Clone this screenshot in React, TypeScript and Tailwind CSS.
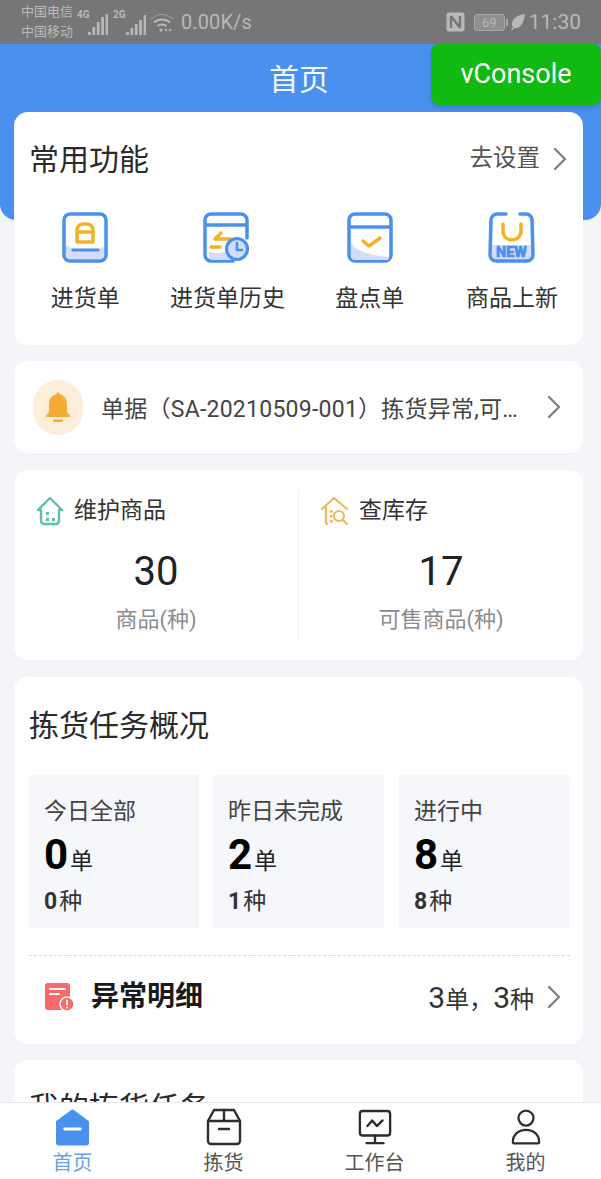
import type { ReactNode } from "react";

const blue = "#4a90ee";
const yellow = "#f4b325";
const lavender = "#d3dcf8";

function Chevron({ className }: { className?: string }) {
  return (
    <svg viewBox="0 0 14 24" className={className} fill="none" stroke="#7d7d7d" strokeWidth="2.2" strokeLinecap="round" strokeLinejoin="round">
      <polyline points="2,2 12,12 2,22" />
    </svg>
  );
}

function Signal({ bars, width }: { bars: number[]; width: number }) {
  return (
    <svg width={width} height="22" viewBox={`0 0 ${width} 22`} fill="#b8b8b8">
      {bars.map((h, i) => (
        <rect key={i} x={i * 4.4} y={22 - h} width="2.8" height={h} />
      ))}
    </svg>
  );
}

function StatusBar() {
  return (
    <div className="h-[44px] shrink-0 bg-[#767676] text-[#b9b9b9] flex items-center pl-[21px] pr-[20px]">
      <div className="flex flex-col text-[13px] leading-[20px] w-[52px] whitespace-nowrap">
        <span>中国电信</span>
        <span>中国移动</span>
      </div>
      <div className="ml-[4px] flex items-end h-[26px]">
        <span className="text-[10px] font-bold leading-none self-start mt-[1px] w-[11px] whitespace-nowrap">4G</span>
        <Signal bars={[3, 8, 13, 18, 21]} width={20} />
      </div>
      <div className="ml-[5px] flex items-end h-[26px]">
        <span className="text-[10px] font-bold leading-none self-start mt-[1px] w-[13px] whitespace-nowrap">2G</span>
        <Signal bars={[3, 7, 11, 15, 20]} width={20} />
      </div>
      <svg width="24" height="24" viewBox="0 0 24 24" fill="none" stroke="#b8b8b8" className="ml-[4px]">
        <path d="M1 9c6-6 16-6 22 0" strokeWidth="1.2" opacity="0.6" />
        <path d="M4 12.500c4.500-4 11.500-4 16 0" strokeWidth="2" />
        <path d="M7.500 16c2.500-2 6.500-2 9 0" strokeWidth="2" />
        <circle cx="11" cy="20" r="1.600" fill="#b8b8b8" stroke="none" />
        <circle cx="16" cy="20" r="1.200" fill="#b8b8b8" stroke="none" />
        <circle cx="20" cy="20" r="1.200" fill="#b8b8b8" stroke="none" />
      </svg>
      <span className="ml-[7px] text-[20px] tracking-[0.1px]">0.00K/s</span>

      <div className="ml-auto flex items-center">
        <svg width="19" height="20" viewBox="0 0 19 20" fill="none">
          <rect x="0.500" y="0.500" width="18" height="19" rx="2.500" fill="#b8b8b8" />
          <path d="M5 4v12M14 4v12M5 4l9 12" stroke="#767676" strokeWidth="2.400" />
        </svg>
        <div className="ml-[9px] w-[31px] h-[17px] rounded-[3px] border border-[#a8a8a8] bg-[#8f8f8f] flex items-center justify-center text-[13px] leading-none">69</div>
        <div className="ml-[1px] w-[2px] h-[7px] bg-[#a8a8a8]" />
        <svg width="14" height="16" viewBox="0 0 14 16" className="ml-[3px]" fill="#b8b8b8">
          <path d="M14 0C7 1 1 4 1 10c0 1.500.400 2.500 1 3.300L0 16l1 .5L3.500 14c5 1 9-3 10.500-14z" />
        </svg>
        <span className="ml-[4px] text-[21px] leading-none">11:30</span>
      </div>
    </div>
  );
}

function Card({ className, children }: { className?: string; children: ReactNode }) {
  return <div className={`bg-white rounded-[14px] ${className ?? ""}`}>{children}</div>;
}

function StockInIcon() {
  return (
    <svg width="46" height="51" viewBox="0 0 46 51" fill="none">
      <rect x="2" y="2" width="42" height="47" rx="6" fill="#fff" stroke={blue} strokeWidth="3.500" />
      <path d="M4 33c10 7 24 6 38 2v8a4 4 0 0 1-4 4H8a4 4 0 0 1-4-4z" fill={lavender} />
      <path d="M15 29V18a6 6 0 0 1 6-6h4a6 6 0 0 1 6 6v11a1 1 0 0 1-1 1H16a1 1 0 0 1-1-1zM15 20h16" fill="#fff" stroke={yellow} strokeWidth="3.500" strokeLinejoin="round" />
      <path d="M11 38h25" stroke={blue} strokeWidth="3.200" strokeLinecap="round" />
    </svg>
  );
}

function StockHistoryIcon() {
  return (
    <svg width="48" height="51" viewBox="0 0 48 51" fill="none">
      <path d="M30 49H8a6 6 0 0 1-6-6V8a6 6 0 0 1 6-6h30a6 6 0 0 1 6 6v18" stroke={blue} strokeWidth="3.500" strokeLinecap="round" />
      <path d="M2 13h42" stroke={blue} strokeWidth="3.500" />
      <path d="M6 40c8 2 14 1 20 0l4 8H9a4 4 0 0 1-3-3z" fill={lavender} />
      <path d="M18 21l-6 6h16M8 35h9" stroke={yellow} strokeWidth="3.500" strokeLinecap="round" strokeLinejoin="round" />
      <circle cx="34" cy="37" r="10.500" fill={lavender} stroke={blue} strokeWidth="3.200" />
      <path d="M34 31v7h5" stroke={blue} strokeWidth="2.600" strokeLinecap="round" strokeLinejoin="round" />
    </svg>
  );
}

function StockCheckIcon() {
  return (
    <svg width="46" height="51" viewBox="0 0 46 51" fill="none">
      <rect x="2" y="2" width="42" height="47" rx="6" fill="#fff" stroke={blue} strokeWidth="3.500" />
      <path d="M4 31c6 9 18 12 38 14v1a2 2 0 0 1-2 2H8a4 4 0 0 1-4-4z" fill={lavender} />
      <path d="M2 15h42" stroke={blue} strokeWidth="3.500" />
      <path d="M16 29l6 5 11-8" stroke={yellow} strokeWidth="3.500" strokeLinecap="round" strokeLinejoin="round" />
    </svg>
  );
}

function NewGoodsIcon() {
  return (
    <svg width="47" height="51" viewBox="0 0 47 51" fill="none">
      <path d="M4 33h39v11a4 4 0 0 1-4 4H8a4 4 0 0 1-4-4z" fill={lavender} />
      <path d="M18 2H9a6 6 0 0 0-6 6L2 43a6 6 0 0 0 6 6h31a6 6 0 0 0 6-6L44 8a6 6 0 0 0-6-6h-6" stroke={blue} strokeWidth="3.500" strokeLinecap="round" />
      <path d="M15 12v7a9 9 0 0 0 18 0v-7" stroke={yellow} strokeWidth="3.500" strokeLinecap="round" />
      <text x="23.500" y="45" textAnchor="middle" fontSize="14.500" fontWeight="900" fill={blue} stroke={blue} strokeWidth="0.500" fontFamily="Roboto, sans-serif">NEW</text>
    </svg>
  );
}

const shortcuts = [
  { label: "进货单", icon: <StockInIcon /> },
  { label: "进货单历史", icon: <StockHistoryIcon /> },
  { label: "盘点单", icon: <StockCheckIcon /> },
  { label: "商品上新", icon: <NewGoodsIcon /> },
];

function Shortcuts() {
  return (
    <Card className="h-[233px]">
      <div className="flex items-center justify-between pl-[15px] pr-[16px] pt-[20px] h-[76px]">
        <span className="text-[30px] leading-[40px] text-[#2b2b2b]">常用功能</span>
        <div className="flex items-center text-[23.500px] text-[#555] -mt-[2px]">
          去设置
          <Chevron className="w-[14px] h-[24px] ml-[13px]" />
        </div>
      </div>
      <div className="grid grid-cols-4 mt-[24px]">
        {shortcuts.map((s) => (
          <div key={s.label} className="flex flex-col items-center">
            <div className="h-[51px] flex items-center">{s.icon}</div>
            <span className="mt-[20px] text-[23px] leading-[32px] text-[#333] whitespace-nowrap">{s.label}</span>
          </div>
        ))}
      </div>
    </Card>
  );
}

function Notice() {
  return (
    <Card className="h-[92px] flex items-center pl-[19px] pr-[22px]">
      <div className="w-[50px] h-[55px] rounded-full bg-[#fdeed9] flex items-center justify-center shrink-0">
        <svg width="24" height="30" viewBox="0 0 24 30" fill="#f5ac35">
          <path d="M12 0l2.500 2.500C19 4 21 7.500 21 12v8l3 3.500V25H0v-1.500L3 20v-8c0-4.500 2-8 6.500-9.500z" />
          <rect x="7" y="27.500" width="10" height="2.500" rx="1.200" />
        </svg>
      </div>
      <span className="ml-[18px] mt-[7px] w-[420px] truncate text-[23px] tracking-[0.25px] text-[#444]">单据（SA-20210509-001）拣货异常,可能需要处理</span>
      <Chevron className="w-[14px] h-[24px] ml-auto" />
    </Card>
  );
}

function MaintainIcon() {
  return (
    <svg width="28" height="30" viewBox="0 0 28 30" fill="none" stroke="#5cc2a6" strokeWidth="2.400" strokeLinejoin="round" strokeLinecap="round">
      <path d="M14 2L2 14h3v11a3 3 0 0 0 3 3h12a3 3 0 0 0 3-3V14h3z" />
      <rect x="10" y="16" width="3" height="3" fill="#5cc2a6" stroke="none" />
      <rect x="10" y="22" width="3" height="3" fill="#5cc2a6" stroke="none" />
      <rect x="16" y="22" width="3" height="3" fill="#5cc2a6" stroke="none" />
    </svg>
  );
}

function StockQueryIcon() {
  return (
    <svg width="28" height="30" viewBox="0 0 28 30" fill="none" stroke="#ecb95c" strokeWidth="2.200" strokeLinejoin="round" strokeLinecap="round">
      <path d="M1 13L13 2l13 11M5 11v14a3 3 0 0 0 1 3" />
      <circle cx="18" cy="20" r="5" />
      <path d="M22 24l4 4" />
      <rect x="9" y="14" width="2.600" height="2.600" fill="#ecb95c" stroke="none" />
      <rect x="9" y="19" width="2.600" height="2.600" fill="#ecb95c" stroke="none" />
      <rect x="9" y="24" width="2.600" height="2.600" fill="#ecb95c" stroke="none" />
    </svg>
  );
}

function StatCell({ icon, title, value, unit }: { icon: ReactNode; title: string; value: string; unit: string }) {
  return (
    <div className="flex-1">
      <div className="flex items-center h-[30px] pl-[22px] gap-[10px] text-[23px] text-[#333]">
        {icon}
        <span>{title}</span>
      </div>
      <div className="mt-[23px] text-center text-[40px] leading-[46px] text-[#222]">{value}</div>
      <div className="mt-[10px] text-center text-[22px] leading-[30px] text-[#8c8c8c]">{unit}</div>
    </div>
  );
}

function Stats() {
  return (
    <Card className="h-[190px] mt-[1px] pt-[26px] flex">
      <StatCell icon={<MaintainIcon />} title="维护商品" value="30" unit="商品(种)" />
      <div className="w-[1px] h-[149px] -mt-[5px] bg-[#efefef]" />
      <StatCell icon={<StockQueryIcon />} title="查库存" value="17" unit="可售商品(种)" />
    </Card>
  );
}

function TaskTile({ title, orders, kinds, className }: { title: string; orders: string; kinds: string; className: string }) {
  return (
    <div className={`bg-[#f5f7fb] h-[153px] pl-[15px] pt-[21px] ${className}`}>
      <div className="text-[23px] leading-[32px] text-[#444]">{title}</div>
      <div className="mt-[3px] flex items-baseline h-[48px] text-[#222]">
        <span className="text-[42px] leading-[48px] font-bold text-black">{orders}</span>
        <span className="ml-[2px] text-[23px]">单</span>
      </div>
      <div className="mt-[7px] flex items-baseline text-[#333]">
        <span className="text-[23px] leading-[32px] font-bold">{kinds}</span>
        <span className="ml-[2px] text-[23px] leading-[32px]">种</span>
      </div>
    </div>
  );
}

function PickingOverview() {
  return (
    <Card className="h-[367px] mt-[1px] pl-[15px] pr-[13px]">
      <div className="pt-[29px] text-[30px] leading-[40px] text-[#2b2b2b]">拣货任务概况</div>
      <div className="mt-[29px] flex">
        <TaskTile title="今日全部" orders="0" kinds="0" className="w-[170px]" />
        <TaskTile title="昨日未完成" orders="2" kinds="1" className="w-[171px] ml-[14px]" />
        <TaskTile title="进行中" orders="8" kinds="8" className="w-[171px] ml-[15px]" />
      </div>
      <div className="mt-[27px] border-t border-dashed border-[#d9d9d9] h-[89px] pb-[6px] flex items-center pl-[16px] pr-[9px]">
        <svg width="30" height="30" viewBox="0 0 30 30" className="shrink-0">
          <rect x="0" y="1" width="25" height="27" rx="3" fill="#f96a68" />
          <path d="M5 7h15M5 12h9" stroke="#fff" strokeWidth="2" strokeLinecap="round" />
          <circle cx="22" cy="22" r="7" fill="#f96a68" stroke="#fff" strokeWidth="1.500" />
          <path d="M22 18.500v4" stroke="#fff" strokeWidth="1.800" strokeLinecap="round" />
          <circle cx="22" cy="25.500" r="1" fill="#fff" />
        </svg>
        <span className="ml-[16px] text-[28px] font-bold text-[#1a1a1a]">异常明细</span>
        <div className="ml-auto flex items-center">
          <span className="text-[#333] text-[24px]"><span className="text-[30px]">3</span>单，<span className="text-[30px]">3</span>种</span>
          <Chevron className="w-[14px] h-[24px] ml-[13px]" />
        </div>
      </div>
    </Card>
  );
}

const tabs = [
  {
    label: "首页",
    active: true,
    icon: (
      <svg width="35" height="38" viewBox="0 0 36 38">
        <path d="M18 1a3 3 0 0 1 2 1l15 11v22a3 3 0 0 1-3 3H4a3 3 0 0 1-3-3V13L16 2a3 3 0 0 1 2-1z" fill={blue} />
        <path d="M10 21h16" stroke="#fff" strokeWidth="3" strokeLinecap="round" />
      </svg>
    ),
  },
  {
    label: "拣货",
    active: false,
    icon: (
      <svg width="36" height="38" viewBox="0 0 36 38" fill="none" stroke="#2b2d33" strokeWidth="2.400" strokeLinejoin="round">
        <path d="M8 2h20l6 11v20a3 3 0 0 1-3 3H5a3 3 0 0 1-3-3V13z" />
        <path d="M2 13h32M18 2v11" />
        <path d="M13 21h10" strokeLinecap="round" />
      </svg>
    ),
  },
  {
    label: "工作台",
    active: false,
    icon: (
      <svg width="34" height="36" viewBox="0 0 36 38" fill="none" stroke="#2b2d33" strokeWidth="2.500" strokeLinecap="round" strokeLinejoin="round">
        <rect x="2" y="2" width="32" height="26" rx="3" />
        <path d="M10 18l5-6 5 6 6-6M18 28v8M9 36h18" />
      </svg>
    ),
  },
  {
    label: "我的",
    active: false,
    icon: (
      <svg width="30" height="38" viewBox="0 0 32 38" fill="none" stroke="#2b2d33" strokeWidth="2.400" strokeLinejoin="round">
        <circle cx="16" cy="9.500" r="8" />
        <path d="M2 35c0-8 6-13 14-13s14 5 14 13a1.500 1.500 0 0 1-1.500 1.500h-25A1.500 1.500 0 0 1 2 35z" />
      </svg>
    ),
  },
];

function TabBar() {
  return (
    <div className="h-[77px] shrink-0 bg-white border-t border-[#e6e6e6] pt-[5px]">
      <div className="grid grid-cols-[repeat(4,151px)] -ml-[3px]">
        {tabs.map((t) => (
          <div key={t.label} className="flex flex-col items-center">
            <div className="h-[38px] flex items-center">{t.icon}</div>
            <span className={`mt-[3px] text-[20px] leading-[28px] ${t.active ? "text-[#6aa2e6]" : "text-[#555]"}`}>{t.label}</span>
          </div>
        ))}
      </div>
    </div>
  );
}

export default function App() {
  return (
    <div className="relative w-[601px] h-[1179px] overflow-hidden flex flex-col bg-[#f3f5f9] [font-family:Roboto,'Noto_Sans_CJK_SC',sans-serif]">
      <StatusBar />
      <div className="flex-1 min-h-0 overflow-hidden">
        <div className="h-[176px] bg-[#4a90ee] rounded-b-[16px] pr-[3px] text-center text-[#f4f8ff] text-[30px] leading-[72px]">首页</div>
        <div className="-mt-[108px] pl-[14px] pr-[18px] flex flex-col gap-[16px]">
          <Shortcuts />
          <Notice />
          <Stats />
          <PickingOverview />
          <Card className="h-[200px] pl-[15px] pt-[28px]">
            <div className="text-[30px] leading-[40px] text-[#2b2b2b]">我的拣货任务</div>
          </Card>
        </div>
      </div>
      <TabBar />

      {/* vConsole floats over the page */}
      <div className="absolute right-0 top-[44px] w-[170px] h-[61px] bg-[#10ba10] rounded-[8px] shadow-md flex items-center justify-center text-white text-[27px]">
        vConsole
      </div>
    </div>
  );
}
